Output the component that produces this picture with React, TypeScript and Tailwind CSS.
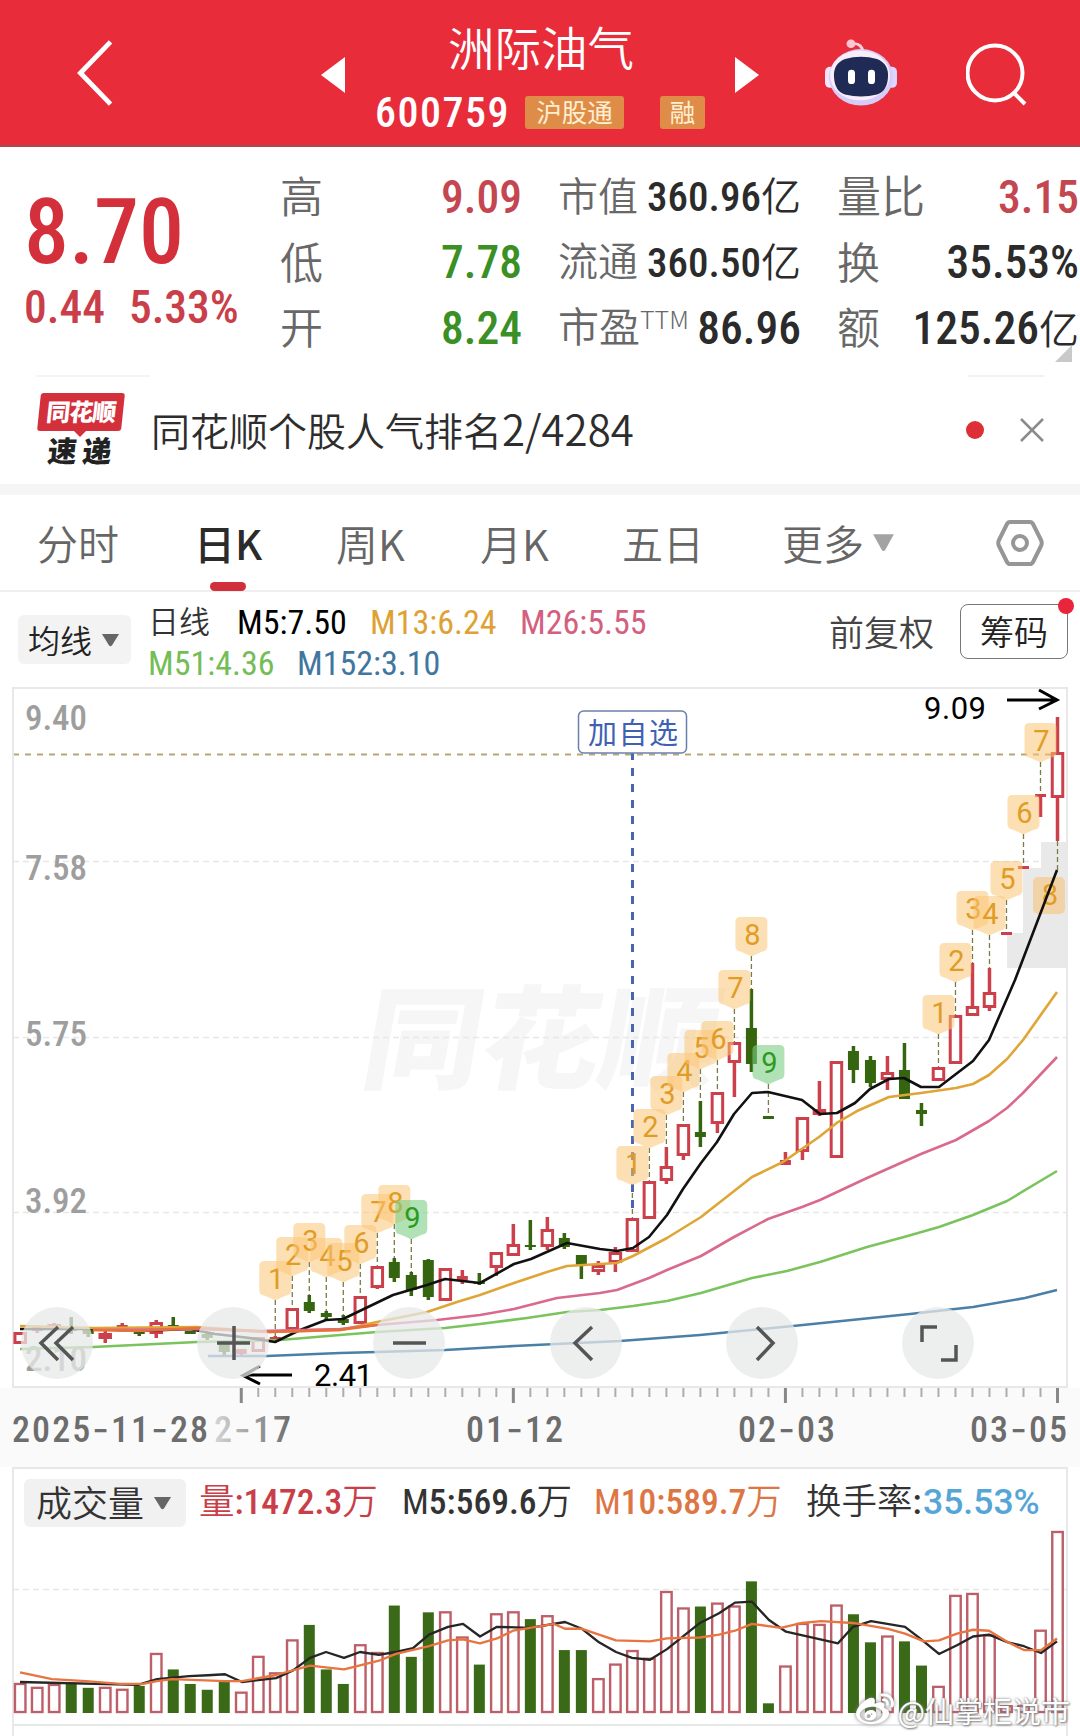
import { clsx } from 'clsx';
import { FaWeibo } from 'react-icons/fa';

const CJK = "font-['Noto_Sans_CJK_SC',sans-serif]";
const NUM = "font-['Roboto','Noto_Sans_CJK_SC',sans-serif]";

const RED = '#cb404b';
const GREEN = '#36650f';

// x of the centre of the n-th bar
const barX = (i: number) => 20.2 + 17.005 * i;

// [body top, body bottom, high, low, up, volume top]
type Bar = [number, number, number, number, 0 | 1, number];

const bars: Bar[] = [
  [1332, 1344, 1332, 1344, 1, 1691],
  [1327, 1331, 1325, 1333, 1, 1695],
  [1324, 1330, 1323, 1331, 1, 1692],
  [1328, 1331, 1317, 1334, 0, 1691],
  [1329, 1334, 1328, 1337, 0, 1696],
  [1333, 1339, 1331, 1343, 1, 1695],
  [1325, 1329, 1323, 1330, 1, 1697],
  [1331, 1334, 1329, 1336, 0, 1694],
  [1322, 1334, 1320, 1338, 1, 1660],
  [1325, 1328, 1317, 1329, 0, 1677],
  [1331, 1334, 1331, 1334, 0, 1692],
  [1334, 1338, 1333, 1340, 0, 1698],
  [1342, 1352, 1340, 1355, 0, 1690],
  [1349, 1354, 1349, 1355, 1, 1700],
  [1337, 1352, 1337, 1352, 1, 1663],
  [1337, 1341, 1336, 1343, 1, 1680],
  [1308, 1330, 1308, 1330, 1, 1646],
  [1302, 1311, 1295, 1313, 0, 1631],
  [1313, 1317, 1311, 1321, 0, 1677],
  [1319, 1323, 1315, 1325, 0, 1692],
  [1296, 1324, 1296, 1324, 1, 1651],
  [1266, 1288, 1266, 1289, 1, 1659],
  [1262, 1278, 1258, 1282, 0, 1611],
  [1275, 1290, 1272, 1296, 0, 1664],
  [1260, 1297, 1259, 1300, 0, 1618],
  [1268, 1301, 1268, 1301, 1, 1617],
  [1276, 1281, 1270, 1284, 1, 1643],
  [1282, 1284, 1273, 1285, 0, 1672],
  [1252, 1268, 1252, 1276, 1, 1619],
  [1244, 1256, 1224, 1256, 1, 1617],
  [1245, 1247, 1220, 1250, 0, 1625],
  [1229, 1247, 1217, 1250, 1, 1621],
  [1238, 1247, 1233, 1249, 0, 1657],
  [1255, 1266, 1255, 1279, 0, 1657],
  [1265, 1272, 1261, 1275, 1, 1686],
  [1252, 1263, 1247, 1272, 1, 1671],
  [1218, 1252, 1218, 1252, 1, 1657],
  [1181, 1219, 1181, 1219, 1, 1665],
  [1166, 1181, 1147, 1184, 1, 1596],
  [1124, 1156, 1124, 1160, 1, 1613],
  [1132, 1137, 1101, 1147, 0, 1612],
  [1092, 1124, 1092, 1133, 1, 1608],
  [1042, 1063, 1042, 1097, 1, 1611],
  [1028, 1064, 989, 1072, 0, 1586],
  [1116, 1119, 1116, 1119, 0, 1712],
  [1160, 1165, 1152, 1165, 1, 1673],
  [1117, 1152, 1117, 1160, 1, 1629],
  [1109, 1115, 1081, 1116, 1, 1630],
  [1061, 1158, 1061, 1158, 1, 1610],
  [1051, 1070, 1046, 1083, 0, 1620],
  [1060, 1083, 1056, 1087, 0, 1649],
  [1072, 1080, 1056, 1090, 1, 1642],
  [1070, 1099, 1043, 1099, 0, 1648],
  [1110, 1114, 1103, 1126, 0, 1673],
  [1067, 1081, 1067, 1081, 1, 1694],
  [1015, 1064, 1015, 1064, 1, 1600],
  [1006, 1016, 963, 1016, 1, 1598],
  [992, 1008, 968, 1011, 1, 1641],
  [932, 935, 932, 935, 1, 1714],
  [866, 869, 866, 869, 1, 1714],
  [794, 797, 794, 817, 1, 1636],
  [752, 798, 717, 841, 1, 1534],
];

const averages = [
  { color: '#4a80a8', points: '208,1356 267,1356 340,1353 377,1352 445,1350 514,1346 620,1341 700,1335 793,1326 910,1314 973,1307 1025,1298 1057,1290' },
  { color: '#7ac35d', points: '20,1349 93,1347 197,1342 280,1340 340,1335 377,1332 445,1328 480,1324 527,1318 567,1312 600,1310 633,1306 667,1301 701,1293 752,1278 787,1271 820,1262 867,1247 904,1237 939,1227 973,1215 1007,1201 1057,1171' },
  { color: '#111111', points: '20,1329 93,1329 140,1331 190,1329 215,1334 250,1338 275,1342 300,1330 326,1320 343,1319 393,1295 427,1285 445,1279 480,1283 514,1264 531,1259 567,1243 600,1249 617,1251 633,1248 649,1237 667,1215 683,1189 701,1163 717,1142 734,1114 752,1093 768,1092 802,1100 820,1114 837,1113 855,1103 870,1089 889,1079 904,1078 921,1087 939,1087 973,1061 989,1040 1015,980 1057,870' },
  { color: '#dfa536', points: '20,1326 93,1328 197,1327 270,1332 340,1330 377,1322 427,1312 457,1302 480,1295 514,1283 547,1272 567,1266 600,1264 617,1263 633,1256 667,1238 701,1217 752,1177 783,1162 819,1137 838,1122 857,1111 889,1097 921,1093 956,1088 973,1084 989,1075 1007,1059 1023,1040 1057,992' },
  { color: '#d96a8b', points: '93,1330 197,1329 260,1331 340,1329 377,1325 437,1320 480,1315 514,1309 557,1298 600,1293 617,1290 649,1278 667,1270 701,1256 734,1237 768,1219 802,1207 820,1200 867,1178 921,1154 956,1140 989,1121 1007,1108 1023,1093 1057,1057' },
  { color: '#e8713a', points: '93,1330 140,1331 197,1328 267,1332 340,1330 377,1325' },
];

const volumeAverages = [
  { color: '#262626', points: '20,1690 138,1693 157,1687 189,1684 208,1683 225,1682 242,1690 276,1686 293,1678 310,1665 326,1659 344,1665 360,1659 379,1662 395,1659 413,1655 429,1641 448,1633 463,1630 480,1643 497,1633 530,1634 565,1628 582,1635 599,1649 616,1659 632,1665 650,1667 667,1656 700,1629 719,1619 735,1608 752,1607 769,1626 786,1638 838,1650 853,1633 871,1627 905,1633 920,1645 939,1661 957,1652 973,1643 989,1641 1008,1649 1024,1653 1041,1660 1057,1648' },
  { color: '#e8743f', points: '20,1680 52,1687 86,1689 120,1692 143,1692 157,1689 172,1687 225,1689 242,1689 275,1683 310,1673 344,1677 379,1668 396,1661 429,1653 448,1647 463,1646 480,1650 497,1645 513,1637 530,1634 554,1630 565,1635 582,1635 616,1647 650,1648 667,1645 700,1644 719,1641 735,1637 752,1630 781,1634 802,1629 821,1627 853,1629 888,1635 905,1640 924,1648 939,1647 957,1640 973,1636 989,1637 1008,1649 1024,1657 1041,1657 1057,1645' },
];

// [bar index, top, digit]
const markers: [number, number, number][] = [
  [15, 1261, 1], [16, 1237, 2], [17, 1223, 3], [18, 1238, 4], [19, 1243, 5],
  [20, 1225, 6], [21, 1194, 7], [22, 1185, 8], [23, 1200, 9],
  [36, 1146, 1], [37, 1109, 2], [38, 1076, 3], [39, 1053, 4], [40, 1030, 5],
  [41, 1021, 6], [42, 970, 7], [43, 917, 8], [44, 1045, 9],
  [54, 995, 1], [55, 943, 2], [56, 891, 3], [57, 896, 4], [58, 861, 5],
  [59, 795, 6], [60, 723, 7],
];

const Triangle = ({ className }: { className?: string }) => (
  <svg viewBox="0 0 20 14" preserveAspectRatio="none" className={className} fill="currentColor">
    <path d="M1 1h18l-7.5 11.5q-1.500 1.500-3 0z" />
  </svg>
);

const Robot = () => (
  <svg viewBox="0 0 72 72" preserveAspectRatio="none" className="h-[69px] w-[72px]">
    <path d="M27 6q10-1 11 9" fill="none" stroke="#fbd3df" strokeWidth="3" />
    <circle cx="26" cy="6" r="4.500" fill="#ffc6d2" />
    <rect x="0" y="30" width="12" height="22" rx="5" fill="#f5e4fb" />
    <rect x="60" y="30" width="12" height="22" rx="5" fill="#dfd6ff" />
    <ellipse cx="36" cy="41" rx="32" ry="29.500" fill="#d5cdf8" />
    <ellipse cx="35" cy="39" rx="30" ry="26" fill="#f8edfb" />
    <path d="M20 22q16-5 32 0q12 5 11 19q-1 15-11 18q-16 4-32 0q-10-3-11-18q-1-14 11-19z" fill="#1f2b55" />
    <rect x="23" y="33" width="7" height="15" rx="3.500" fill="#fff" />
    <rect x="43" y="33" width="7" height="15" rx="3.500" fill="#fff" />
  </svg>
);

const Tag = ({ children, className }: { children: React.ReactNode; className: string }) => (
  <span className={clsx(CJK, 'flex h-[33px] items-center justify-center rounded-[3px] bg-[#df8c48] pb-[2px] text-[25.500px] text-[#ffefd2]', className)}>
    {children}
  </span>
);

const Header = () => (
  <header className="flex h-[147px] items-center border-b-2 border-[#a84a52] bg-[#e82c3a] text-white">
    <svg viewBox="0 0 40 70" className="ml-[75px] h-[68px] w-10" fill="none" stroke="currentColor" strokeWidth="5">
      <path d="M36 3L5 35l31 32" />
    </svg>
    <svg viewBox="0 0 24 36" className="mt-1 ml-[206px] h-9 w-6" fill="currentColor">
      <path d="M24 0v36L0 18z" />
    </svg>
    <div className="ml-[30px] flex h-[145px] w-[330px] flex-col">
      <div className={clsx(CJK, 'mt-[18px] ml-[2px] text-center text-[46.500px] leading-[56px] font-[350]')}>洲际油气</div>
      <div className="mt-[13px] flex h-[50px] items-center">
        <span className={clsx(NUM, 'w-[150px] text-[42px] font-medium tracking-[1.500px] [font-stretch:80%]')}>600759</span>
        <Tag className="w-[99px]">沪股通</Tag>
        <Tag className="ml-9 w-[45px]">融</Tag>
      </div>
    </div>
    <svg viewBox="0 0 24 36" className="mt-1 ml-[30px] h-9 w-6" fill="currentColor">
      <path d="M0 0v36l24-18z" />
    </svg>
    <div className="ml-[66px]"><Robot /></div>
    <svg viewBox="0 0 62 64" className="mt-1 ml-[69px] h-16 w-[62px]" fill="none" stroke="currentColor" strokeWidth="4">
      <circle cx="29" cy="30" r="27.500" />
      <path d="M48 50l11 11" />
    </svg>
  </header>
);

const Stat = ({ label, value, tone = 'text-[#2b2b2b]' }: { label: React.ReactNode; value: React.ReactNode; tone?: string }) => (
  <div className="flex h-[65.500px] items-center justify-between whitespace-nowrap">
    <span className={clsx(CJK, 'pb-[7px] font-[350] text-[#686868]')}>{label}</span>
    <span className={clsx(NUM, tone, 'pt-[2px] font-medium [font-stretch:79%]')}>{value}</span>
  </div>
);

const Yi = () => <span className={clsx(CJK, 'text-[40px] leading-none font-[350]')}>亿</span>;

const Quote = () => (
  <section className="relative flex h-[228px] pt-[17px]">
    <div className={clsx(NUM, 'w-[280px] pl-[24px] font-medium text-[#d4303b] [font-stretch:78%]')}>
      <div className="mt-[23px] text-[90px] leading-[92px]">8.70</div>
      <div className="flex gap-[24px] text-[45.500px] leading-[58px] text-[#c93e48]">
        <span>0.44</span>
        <span>5.33%</span>
      </div>
    </div>
    <div className="w-[242px] text-[45.500px]">
      <Stat label={<span className="text-[43px]">高</span>} value="9.09" tone="text-[#c34650]" />
      <Stat label={<span className="text-[43px]">低</span>} value="7.78" tone="text-[#3a8f25]" />
      <Stat label={<span className="text-[43px]">开</span>} value="8.24" tone="text-[#3a8f25]" />
    </div>
    <div className="ml-9 w-[243px] text-[41px]">
      <Stat label={<span className="text-[40px]">市值</span>} value={<>360.96<Yi /></>} />
      <Stat label={<span className="text-[40px]">流通</span>} value={<>360.50<Yi /></>} />
      <Stat
        label={<span className="text-[41px]">市盈<sup className="-top-[13px] text-[25px] font-light">TTM</sup></span>}
        value={<span className="text-[45.500px] [font-stretch:76%]">86.96</span>}
      />
    </div>
    <div className="ml-9 w-[242px] text-[45.500px]">
      <Stat label={<span className="text-[44px]">量比</span>} value="3.15" tone="text-[#c34650]" />
      <Stat label={<span className="text-[43px]">换</span>} value="35.53%" />
      <Stat label={<span className="text-[43px]">额</span>} value={<>125.26<Yi /></>} />
    </div>
    <svg viewBox="0 0 17 17" className="absolute top-[198px] left-[1055px] h-[17px] w-[17px]">
      <path d="M17 0v17H0z" fill="#c9c9c9" />
    </svg>
  </section>
);

const NewsBar = () => (
  <section className="flex h-[109px] items-center bg-white pl-9">
    <div className={clsx(CJK, 'relative h-[109px] w-[90px] pt-[18px] font-black')}>
      <div className="absolute top-0 left-0 h-[2px] w-[114px] bg-[#f4f4f4]" />
      <div className="ml-[3px] flex h-[38px] w-[84px] -skew-x-6 items-center justify-center rounded-[3px] bg-[#d3303c] pb-[2px] text-[24px] tracking-[-1px] text-white">同花顺</div>
      <svg viewBox="0 0 14 7" className="ml-[37px] h-[6px] w-[14px]"><path d="M0 0h14L7 7z" fill="#d3303c" /></svg>
      <div className="-mt-[4px] ml-[12px] flex w-[64px] -skew-x-6 justify-between text-[29px] leading-[32px] text-[#222]">
        <span>速</span>
        <span>递</span>
      </div>
    </div>
    <div className={clsx(CJK, 'ml-[25px] flex-1 pb-[3px] text-[39px] leading-none font-[350] text-[#2d2d2d]')}>
      同花顺个股人气排名<span className="text-[42px]">2/4284</span>
    </div>
    <span className="h-[18px] w-[18px] rounded-full bg-[#dc2f36]" />
    <div className="relative mr-9 ml-9 flex h-[109px] w-6 items-center">
      <div className="absolute top-0 -left-[52px] h-[2px] w-[76px] bg-[#f2f2f2]" />
      <svg viewBox="0 0 24 24" className="h-6 w-6" fill="none" stroke="#8b8b8b" strokeWidth="2.500">
        <path d="M1 1l22 22M23 1L1 23" />
      </svg>
    </div>
  </section>
);

const Tabs = () => (
  <nav className={clsx(CJK, 'flex h-[97px] items-center border-b-2 border-[#efefef] text-[41px] leading-none font-[350] whitespace-nowrap text-[#666]')}>
    <span className="ml-[37px] w-[157px]">分时</span>
    <span className="relative w-[142px] font-medium text-[#2b2b2b]">
      日K
      <i className="absolute -bottom-[28px] left-[16px] h-[9px] w-9 rounded-full bg-[#d22f3c]" />
    </span>
    <span className="w-[144px] text-[42px]">周K</span>
    <span className="w-[142px] text-[42px]">月K</span>
    <span className="w-[160px]">五日</span>
    <span className="flex w-[214px] items-center">
      更多
      <Triangle className="ml-2 h-[19px] w-[23px] text-[#a3a3a3]" />
    </span>
    <svg viewBox="0 0 48 48" className="h-12 w-12" fill="none" stroke="#969696" strokeWidth="4" strokeLinejoin="round">
      <path d="M14 3h20q2 0 3 2l8 16q1.500 3 0 6l-8 16q-1 2-3 2H14q-2 0-3-2L3 27q-1.500-3 0-6l8-16q1-2 3-2z" />
      <circle cx="24" cy="24" r="7" />
    </svg>
  </nav>
);

const Legend = () => (
  <section className="flex h-[95px] pl-[18px]">
    <div className={clsx(CJK, 'mt-[23px] flex h-[49px] w-[113px] items-center justify-between rounded-md bg-[#f3f3f3] pr-[11px] pl-[10px] text-[32px] font-[350] text-[#222]')}>
      <span className="pb-[2px]">均线</span>
      <Triangle className="h-[14px] w-[19px] text-[#666]" />
    </div>
    <div className={clsx(NUM, 'ml-[17px] w-[640px] pt-[9px] text-[34px] font-[450] [font-stretch:83%]')}>
      <div className="flex h-[42px] items-center">
        <span className={clsx(CJK, 'w-[89px] pb-1 text-[31px] font-[350] text-[#333]')}>日线</span>
        <span className="w-[133px] text-black">M5:7.50</span>
        <span className="w-[150px] text-[#dda236]">M13:6.24</span>
        <span className="text-[#d3607f]">M26:5.55</span>
      </div>
      <div className="flex h-[41px] items-center">
        <span className="w-[149px] text-[#74bd57]">M51:4.36</span>
        <span className="text-[#41779f]">M152:3.10</span>
      </div>
    </div>
    <span className={clsx(CJK, 'mt-[20px] ml-[41px] text-[35px] leading-[38px] font-[350] text-[#444]')}>前复权</span>
    <div className={clsx(CJK, 'relative mt-3 ml-[26px] flex h-[55px] w-[108px] items-center justify-center rounded-lg border-[1.5px] border-[#777] pb-[2px] text-[34px] font-[350] text-[#222]')}>
      筹码
      <i className="absolute -top-[7px] -right-[7px] h-4 w-4 rounded-full bg-[#e8253a]" />
    </div>
  </section>
);

const Badge = ({ x, top, digit }: { x: number; top: number; digit: number }) => {
  const nine = digit === 9;
  return (
    <g transform={`translate(${x} ${top})`}>
      <path
        d="M-11 0H11q5 0 5 5V29q0 5-5 5.500L2 38.500q-2 1-4 0L-11 34.500q-5-.5-5-5.500V5q0-5 5-5z"
        fill={nine ? '#7ccf86' : '#fbc476'}
        fillOpacity={nine ? 0.6 : 0.55}
      />
      <text x="1" y="28" textAnchor="middle" fontSize="29" fontWeight="450" fill={nine ? '#2c9a1c' : '#e09c25'} className="font-['Roboto',sans-serif]">
        {digit}
      </text>
    </g>
  );
};

const Candle = ({ bar, x }: { bar: Bar; x: number }) => {
  const [top, bottom, high, low, up] = bar;
  const solid = !up || bottom - top < 6;
  return (
    <g stroke={up ? RED : GREEN} fill={up ? RED : GREEN}>
      {high < top && <path d={`M${x} ${high}V${top}`} strokeWidth="3.500" />}
      {low > bottom && <path d={`M${x} ${bottom}V${low}`} strokeWidth="3.500" />}
      {solid ? (
        <rect x={x - 5.5} y={top} width="11" height={bottom - top} stroke="none" />
      ) : (
        <rect x={x - 5.25} y={top + 1.5} width="10.500" height={bottom - top - 3} fill="#fff" strokeWidth="3" />
      )}
    </g>
  );
};

const dates = [
  { text: '01-12', x: 466, w: 97 },
  { text: '02-03', x: 738, w: 97 },
  { text: '03-05', x: 970, w: 97 },
];

const DateLabel = ({ text, x, w, fill = '#6d6d6d' }: { text: string; x: number; w: number; fill?: string }) => (
  <text x={x} y="1442" textLength={w} fontSize="36" fill={fill} className="font-['Roboto',sans-serif] font-medium [font-stretch:84%]">
    {text.split('-').map((part, i) => (
      <tspan key={i}>
        {i > 0 && <tspan className="font-['Inter',sans-serif]" fontSize="36">-</tspan>}
        {part}
      </tspan>
    ))}
  </text>
);

const controls = [
  'M37 20L20 36l17 17M52 20L35 36l17 17',
  'M37 19V53M20 36H53',
  'M20 36H53',
  'M42 20L25 36l17 17',
  'M31 20L47 36 31 53',
  'M20 35V20H35M54 38V53H39',
];

const KChart = () => (
  <section className="relative h-[780px]">
    <svg viewBox="0 687 1080 780" className="h-[780px] w-[1080px]">
      <defs>
        <linearGradient id="fade" x1="0" x2="1">
          <stop offset="0" stopColor="#6d6d6d" stopOpacity="0.250" />
          <stop offset="0.300" stopColor="#6d6d6d" stopOpacity="0.500" />
          <stop offset="1" stopColor="#6d6d6d" />
        </linearGradient>
      </defs>
      <rect x="0" y="1388" width="1080" height="79" fill="#fafafa" />
      <g className={CJK} fontSize="112" fontWeight="900" fill="#f6f6f6">
        <text transform="translate(358 1080) skewX(-10)" textLength="355" lengthAdjust="spacingAndGlyphs">同花顺</text>
      </g>
      <path d="M1041 842H1067V968H1007V933H1023V868H1041z" fill="#e9e9e9" />
      {[861.5, 1037.5, 1212.5].map((y) => (
        <path key={y} d={`M13 ${y}H1067`} stroke="#e8e8e8" strokeWidth="1.500" strokeDasharray="6 4" />
      ))}
      <path d="M13 754.500H1067" stroke="#b8a67a" strokeWidth="2" strokeDasharray="6 6" />
      <path d="M13 1387V688H1067V1387z" fill="none" stroke="#e8e8ea" strokeWidth="2" />

      <g className="font-['Roboto',sans-serif] font-medium [font-stretch:84%]" fontSize="35" fill="#9e9e9e">
        {[['9.40', 730], ['7.58', 880], ['5.75', 1046], ['3.92', 1213], ['2.10', 1371]].map(([t, y]) => (
          <text key={t} x="25" y={y} textLength="62">{t}</text>
        ))}
      </g>

      {markers.map(([i, top]) => (
        <path
          key={i}
          d={`M${barX(i)} ${top + 39}V${bars[i][2]}`}
          stroke="#7b7b45"
          strokeWidth="1.300"
          strokeDasharray="5 3"
        />
      ))}
      <path d="M1057.500 841V872" stroke="#7b7b45" strokeWidth="1.300" strokeDasharray="5 3" />
      {bars.map((bar, i) => <Candle key={i} bar={bar} x={barX(i)} />)}
      <path d="M632.500 752V1210" stroke="#4865b5" strokeWidth="3" strokeDasharray="8 8" />
      {markers.map(([i, top, digit]) => <Badge key={i} x={barX(i)} top={top} digit={digit} />)}
      <rect x="1033" y="877" width="32" height="37" rx="5" fill="#f9c57c" fillOpacity="0.600" />
      <text x="1050" y="905" textAnchor="middle" fontSize="29" fontWeight="450" fill="#e09c25" className="font-['Roboto',sans-serif]">8</text>
      {averages.map((line) => (
        <polyline key={line.color} points={line.points} fill="none" stroke={line.color} strokeWidth="2.600" strokeLinejoin="round" />
      ))}

      <rect x="578.500" y="711" width="108" height="42" rx="5" fill="#fff" stroke="#6a80ac" strokeWidth="1.500" />
      <text x="588" y="744" fontSize="29" textLength="90" fill="#3f61b5" className={CJK}>加自选</text>

      <g fill="none" stroke="#000" strokeWidth="3">
        <path d="M1007 700H1056M1039 690L1057 700 1039 709" />
        <path d="M292 1375H244M260 1366L243 1375.500 260 1384" />
      </g>
      <g fontSize="31" className="font-['Roboto',sans-serif]">
        <text x="924" y="719" textLength="62">9.09</text>
        <text x="314" y="1386" textLength="59">2.41</text>
      </g>

      {bars.map((_, i) => i >= 13 && (
        <path
          key={i}
          d={`M${barX(i)} 1388V${(i - 13) % 16 === 0 ? 1403 : 1397}`}
          stroke={(i - 13) % 16 === 0 ? '#888' : '#adadad'}
          strokeWidth={(i - 13) % 16 === 0 ? 3 : 2}
        />
      ))}
      <DateLabel text="2025-11-28" x={12} w={196} />
      <DateLabel text="2-17" x={214} w={77} fill="url(#fade)" />
      {dates.map((d) => <DateLabel key={d.text} {...d} />)}
    </svg>
    <div className="absolute top-[620px] left-[21px] flex w-[953px] justify-between">
      {controls.map((d) => (
        <svg key={d} viewBox="0 0 72 72" className="h-[72px] w-[72px] rounded-full bg-[#e7e8e8]/75" fill="none" stroke="#555" strokeWidth="3.500">
          <path d={d} />
        </svg>
      ))}
    </div>
  </section>
);

const Volume = () => (
  <section className="relative h-[269px]">
    <svg viewBox="0 1467 1080 269" className="h-[269px] w-[1080px]">
      <path d="M13 1736V1468H1067V1736M13 1725H1067" fill="none" stroke="#e8e8ea" strokeWidth="2" />
      <path d="M13 1589.500H1067" stroke="#e8e8e8" strokeWidth="1.500" strokeDasharray="6 4" />
      <g transform="translate(0 46.100) scale(1 0.968)">
        {bars.map(([, , , , up, top], i) => up ? (
          <rect key={i} x={barX(i) - 5.25} y={top + 1} width="10.500" height={1720 - top} fill="#fff" stroke="#bd5f68" strokeWidth="2.400" />
        ) : (
          <rect key={i} x={barX(i) - 5.5} y={top} width="11" height={1722 - top} fill="#3a6a17" />
        ))}
        {volumeAverages.map((line) => (
          <polyline key={line.color} points={line.points} fill="none" stroke={line.color} strokeWidth="2.400" strokeLinejoin="round" />
        ))}
      </g>
    </svg>
    <div className={clsx(NUM, 'absolute top-[12px] left-6 flex h-[48px] items-center text-[35.500px] font-medium whitespace-nowrap [font-stretch:85%]')}>
      <div className={clsx(CJK, 'flex h-[48px] w-[162px] items-center justify-between rounded-md bg-[#f1f1f1] pr-[14px] pl-3 text-[36px] font-[350] text-[#333]')}>
        <span className="pb-[4px]">成交量</span>
        <Triangle className="h-[14px] w-[19px] text-[#666]" />
      </div>
      <span className="ml-[13px] w-[203px] text-[#c93e48]"><span className="font-[350]">量</span>:1472.3<span className="font-[350]">万</span></span>
      <span className="w-[192px] text-[#333]"><span className="font-normal">M</span>5:569.6<span className="font-[350]">万</span></span>
      <span className="w-[212px] text-[#dd7645]"><span className="font-normal">M</span>10:589.7<span className="font-[350]">万</span></span>
      <span className="w-[117px] text-[#333]"><span className="font-[350]">换手率</span>:</span>
      <span className="text-[#55a6d6] [font-stretch:88%]">35.53%</span>
    </div>
    <div className={clsx(CJK, 'absolute right-[10px] bottom-[6px] flex h-10 items-center gap-1 text-[29px] leading-none whitespace-nowrap text-white [text-shadow:0_0_3px_#777,1px_1px_2px_#888]')}>
      <FaWeibo className="h-[38px] w-[38px] [filter:drop-shadow(0_0_2px_#777)]" />
      @仙掌柜说市
    </div>
  </section>
);

export default function App() {
  return (
    <main className="h-[1736px] w-[1080px] overflow-hidden bg-white">
      <Header />
      <Quote />
      <NewsBar />
      <div className="h-[11px] bg-[#f5f5f5]" />
      <Tabs />
      <Legend />
      <KChart />
      <Volume />
    </main>
  );
}
